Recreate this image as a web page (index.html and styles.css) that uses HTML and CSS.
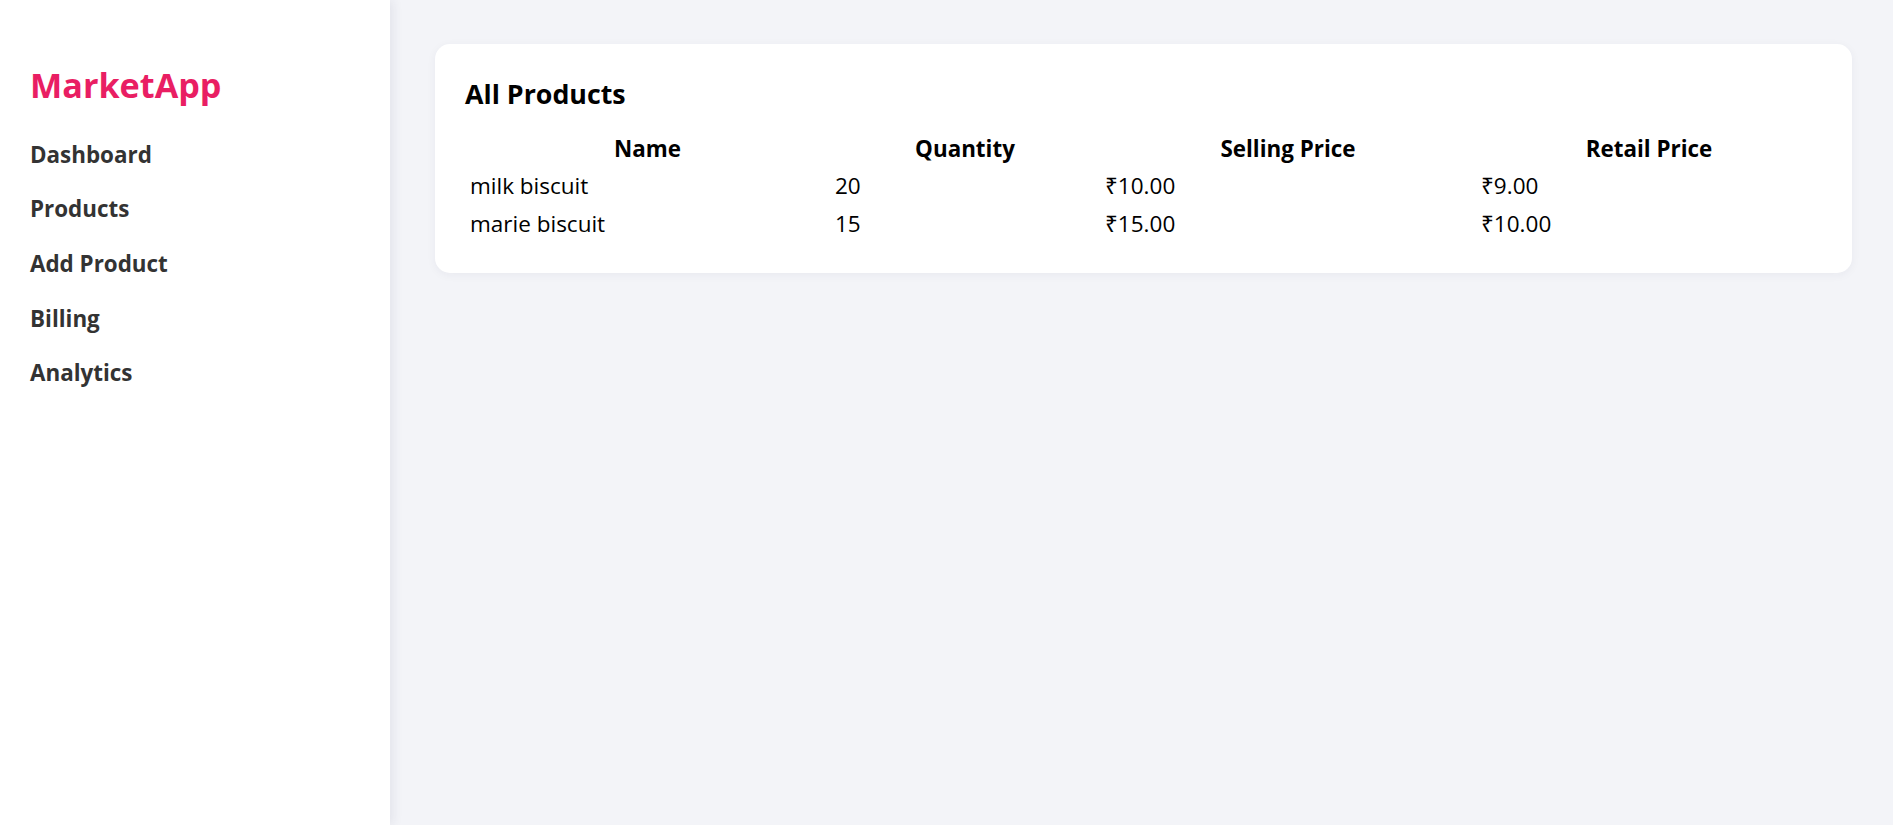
FILE: index.html
```html
<!DOCTYPE html>
<html lang="en">
<head>
<meta charset="utf-8">
<title>MarketApp</title>
<link rel="stylesheet" href="styles.css">
</head>
<body>
<div class="app">
  <aside class="sidebar">
    <h2 class="logo">MarketApp</h2>
    <nav class="nav">
      <a class="nav-item" href="#">Dashboard</a>
      <a class="nav-item" href="#">Products</a>
      <a class="nav-item" href="#">Add Product</a>
      <a class="nav-item" href="#">Billing</a>
      <a class="nav-item" href="#">Analytics</a>
    </nav>
  </aside>
  <main class="main">
    <section class="card">
      <h3 class="card-title">All Products</h3>
      <table class="products">
        <colgroup>
          <col class="c1"><col class="c2"><col class="c3"><col class="c4">
        </colgroup>
        <thead>
          <tr><th>Name</th><th>Quantity</th><th>Selling Price</th><th>Retail Price</th></tr>
        </thead>
        <tbody>
          <tr><td>milk biscuit</td><td>20</td><td>₹10.00</td><td>₹9.00</td></tr>
          <tr><td>marie biscuit</td><td>15</td><td>₹15.00</td><td>₹10.00</td></tr>
        </tbody>
      </table>
    </section>
  </main>
</div>
</body>
</html>
```

FILE: styles.css
```css
* { box-sizing: border-box; }

html, body {
  margin: 0;
  padding: 0;
  height: 100%;
}

body {
  font-family: "Open Sans", "Noto Sans", "Liberation Sans", sans-serif;
  color: #000;
  background: #f3f4f8;
}

.app {
  display: flex;
  min-height: 100vh;
}

.sidebar {
  width: 390px;
  flex: 0 0 390px;
  background: #fff;
  box-shadow: 3px 0 10px rgba(40, 40, 80, 0.08);
  padding: 63px 30px 0 30px;
  position: relative;
  z-index: 1;
}

.logo {
  margin: 0;
  font-size: 34.2px;
  line-height: 44px;
  font-weight: 700;
  color: #e91e63;
}

.nav {
  display: flex;
  flex-direction: column;
  margin-top: 20.6px;
}

.nav-item {
  display: block;
  font-size: 22.4px;
  line-height: 30px;
  padding: 12.3px 0;
  font-weight: 700;
  color: #333;
  text-decoration: none;
}

.main {
  flex: 1;
  padding: 44px 41px 44px 45px;
}

.card {
  background: #fff;
  border-radius: 15px;
  box-shadow: 0 2px 10px rgba(40, 40, 80, 0.05);
  padding: 34px 30px 29px 30px;
}

.card-title {
  margin: 0 0 19.7px 0;
  font-size: 26.8px;
  line-height: 32px;
  font-weight: 700;
}

.products {
  width: 100%;
  border-collapse: collapse;
  table-layout: fixed;
}

.products .c1 { width: 365px; }
.products .c2 { width: 270px; }
.products .c3 { width: 376px; }
.products .c4 { width: 346px; }

.products th {
  font-size: 22.4px;
  line-height: 27px;
  font-weight: 700;
  padding: 5px;
  text-align: center;
}

.products td {
  font-size: 22.5px;
  line-height: 28.5px;
  padding: 5px;
  text-align: left;
}
```
